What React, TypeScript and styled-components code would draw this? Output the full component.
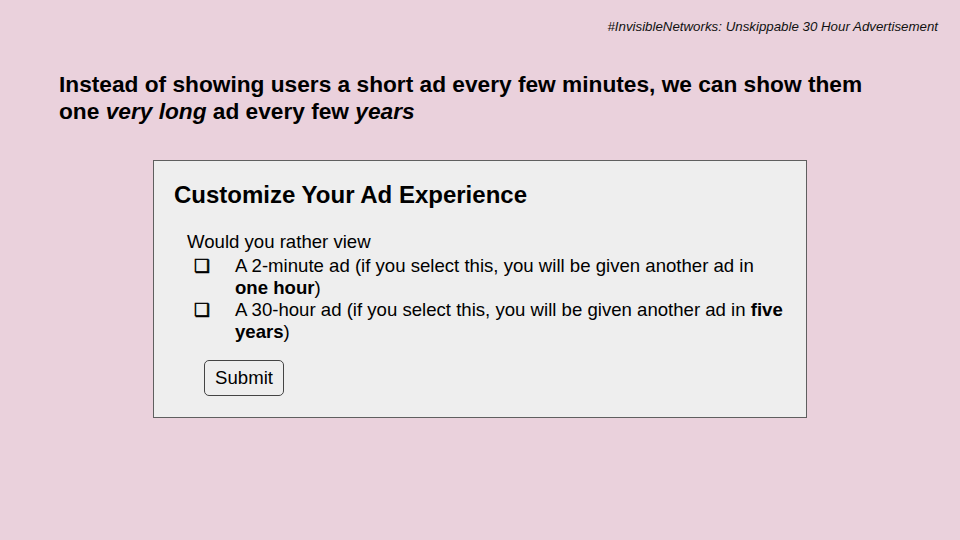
import React from "react";
import styled, { createGlobalStyle } from "styled-components";

const Global = createGlobalStyle`
  html, body { margin: 0; padding: 0; }
  body {
    background: #ead1dc;
    font-family: "Liberation Sans", Arial, sans-serif;
    color: #000;
  }
`;

const Slide = styled.div`
  width: 960px;
  height: 540px;
  box-sizing: border-box;
  display: flex;
  flex-direction: column;
  background: #ead1dc;
  overflow: hidden;
`;

const Tag = styled.div`
  align-self: flex-end;
  margin: 19px 22px 0 0;
  font-size: 13.3px;
  font-style: italic;
  line-height: 16px;
  color: #111;
`;

const Headline = styled.h1`
  margin: 36px 0 0 59px;
  font-size: 22.7px;
  font-weight: 700;
  line-height: 27px;
  white-space: nowrap;
  em { font-style: italic; }
`;

const Card = styled.section`
  margin: 35px 0 0 153px;
  width: 654px;
  height: 258px;
  box-sizing: border-box;
  background: #eeeeee;
  border: 1px solid #5f5f5f;
  padding: 20px 20px 0 20px;
  display: flex;
  flex-direction: column;
`;

const CardTitle = styled.h2`
  margin: 0;
  font-size: 24px;
  font-weight: 700;
  line-height: 28px;
`;

const Question = styled.p`
  margin: 22px 0 0 13px;
  font-size: 18.6px;
  line-height: 22px;
`;

const Options = styled.ul`
  list-style: none;
  margin: 2px 0 0 0;
  padding: 0 0 0 20px;
`;

const Option = styled.li`
  display: flex;
  font-size: 18.6px;
  line-height: 22px;
`;

const Box = styled.span`
  width: 41px;
  flex: none;
  font-size: 18px;
  font-family: "DejaVu Sans", sans-serif;
  -webkit-text-stroke: 0.6px #000;
`;

const OptionText = styled.span`
  flex: 1;
  b { font-weight: 700; }
`;

const SubmitButton = styled.button`
  align-self: flex-start;
  margin: 17px 0 0 30px;
  height: 36px;
  width: 80px;
  padding: 0;
  background: #eeeeee;
  border: 1px solid #444;
  border-radius: 5px;
  font-family: "Liberation Sans", Arial, sans-serif;
  font-size: 18.6px;
  color: #000;
`;

export default function App() {
  return (
    <>
      <Global />
      <Slide>
        <Tag>#InvisibleNetworks: Unskippable 30 Hour Advertisement</Tag>
        <Headline>
          Instead of showing users a short ad every few minutes, we can show them
          <br />
          one <em>very long</em> ad every few <em>years</em>
        </Headline>
        <Card>
          <CardTitle>Customize Your Ad Experience</CardTitle>
          <Question>Would you rather view</Question>
          <Options>
            <Option>
              <Box>❏</Box>
              <OptionText>
                A 2-minute ad (if you select this, you will be given another ad in <b>one hour</b>)
              </OptionText>
            </Option>
            <Option>
              <Box>❏</Box>
              <OptionText>
                A 30-hour ad (if you select this, you will be given another ad in <b>five years</b>)
              </OptionText>
            </Option>
          </Options>
          <SubmitButton>Submit</SubmitButton>
        </Card>
      </Slide>
    </>
  );
}
